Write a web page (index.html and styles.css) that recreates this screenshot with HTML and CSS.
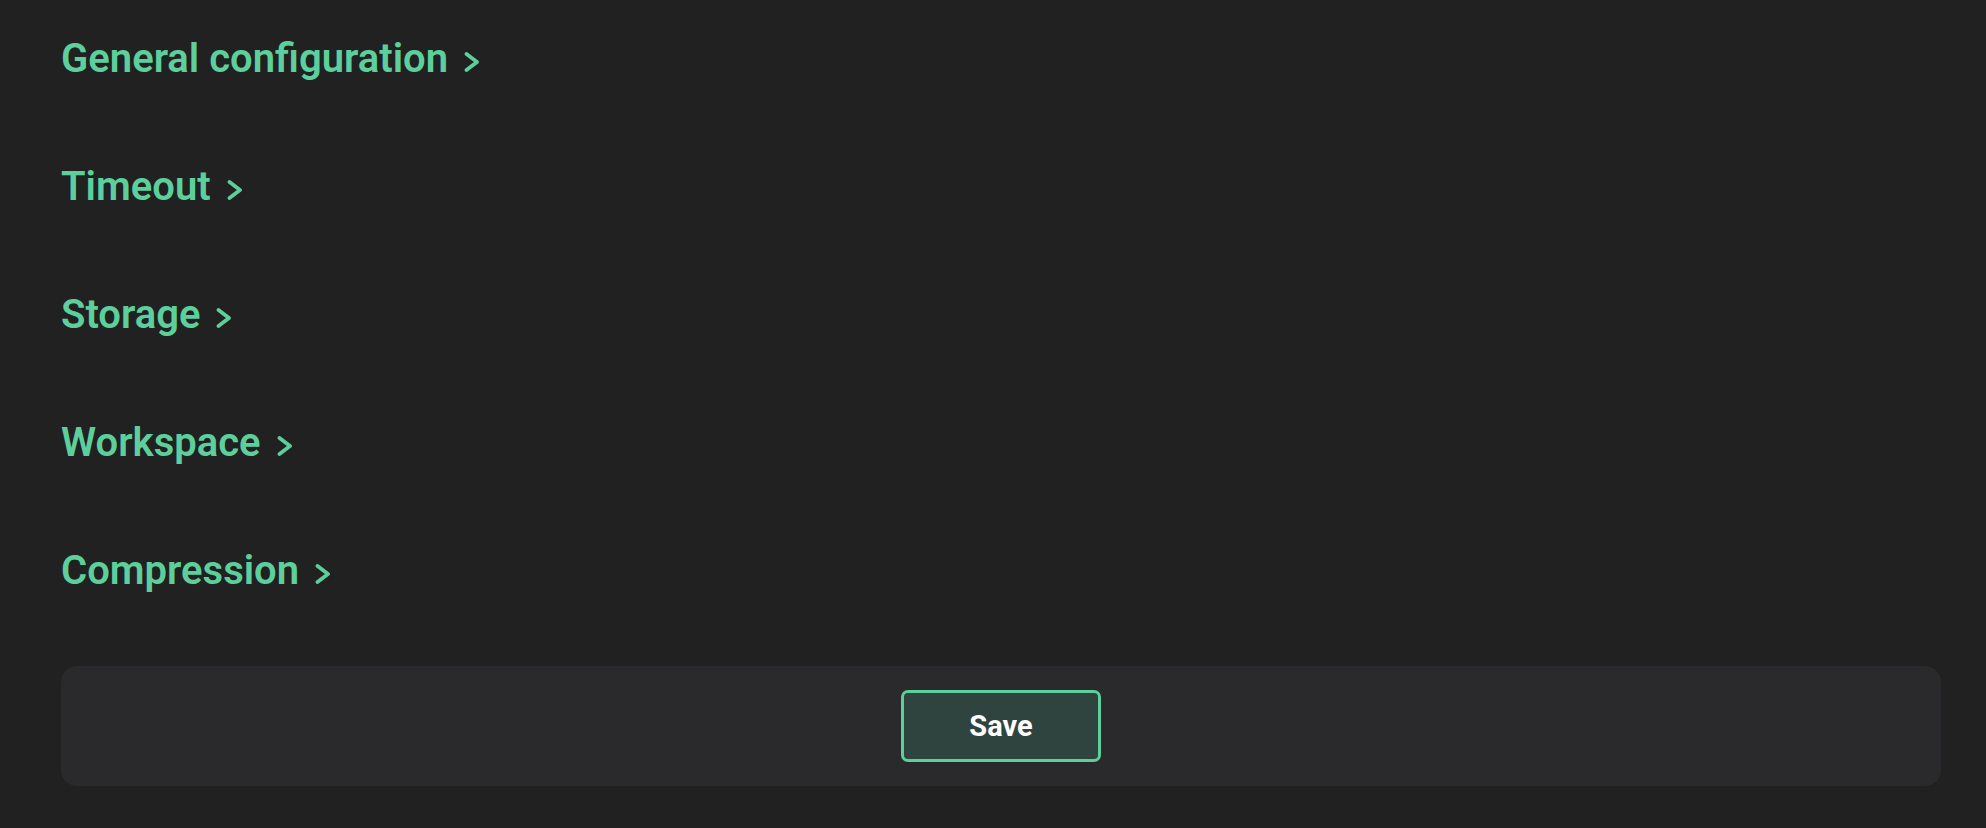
FILE: index.html
```html
<!DOCTYPE html>
<html lang="en">
<head>
<meta charset="utf-8">
<title>Settings</title>
<link rel="stylesheet" href="styles.css">
</head>
<body>
<div class="page">
  <div class="sections">
    <h2 class="section-title">General configuration<svg class="chev" viewBox="0 0 16 20" width="16" height="20"><polyline points="2.5,2 13,10 2.5,18"/></svg></h2>
    <h2 class="section-title">Timeout<svg class="chev" viewBox="0 0 16 20" width="16" height="20"><polyline points="2.5,2 13,10 2.5,18"/></svg></h2>
    <h2 class="section-title">Storage<svg class="chev" viewBox="0 0 16 20" width="16" height="20"><polyline points="2.5,2 13,10 2.5,18"/></svg></h2>
    <h2 class="section-title">Workspace<svg class="chev" viewBox="0 0 16 20" width="16" height="20"><polyline points="2.5,2 13,10 2.5,18"/></svg></h2>
    <h2 class="section-title">Compression<svg class="chev" viewBox="0 0 16 20" width="16" height="20"><polyline points="2.5,2 13,10 2.5,18"/></svg></h2>
  </div>
  <div class="footer">
    <button class="save-btn" type="button">Save</button>
  </div>
</div>
</body>
</html>
```
FILE: styles.css
```css
html, body {
  margin: 0;
  padding: 0;
  background: #212121;
}
body {
  font-family: Roboto, "Noto Sans", "Liberation Sans", sans-serif;
}
.page {
  padding: 35px 45px 42px 61px;
}
.sections {
  display: flex;
  flex-direction: column;
  gap: 80px;
}
.section-title {
  margin: 0;
  font-size: 40px;
  line-height: 48px;
  font-weight: 600;
  color: #5ccf9c;
}
.chev {
  vertical-align: baseline;
  margin-left: 16px;
  fill: none;
  stroke: #5ccf9c;
  stroke-width: 3.8;
  stroke-linecap: round;
  stroke-linejoin: round;
}
.footer {
  margin-top: 71px;
  height: 120px;
  background: #2a2a2c;
  border-radius: 16px;
  display: flex;
  align-items: center;
  justify-content: center;
}
.save-btn {
  box-sizing: border-box;
  width: 200px;
  height: 72px;
  border: 3px solid #5ccf9c;
  border-radius: 7px;
  background: #30443f;
  color: #ffffff;
  font-family: Roboto, "Noto Sans", "Liberation Sans", sans-serif;
  font-size: 29px;
  font-weight: 700;
  padding: 0;
}
```
